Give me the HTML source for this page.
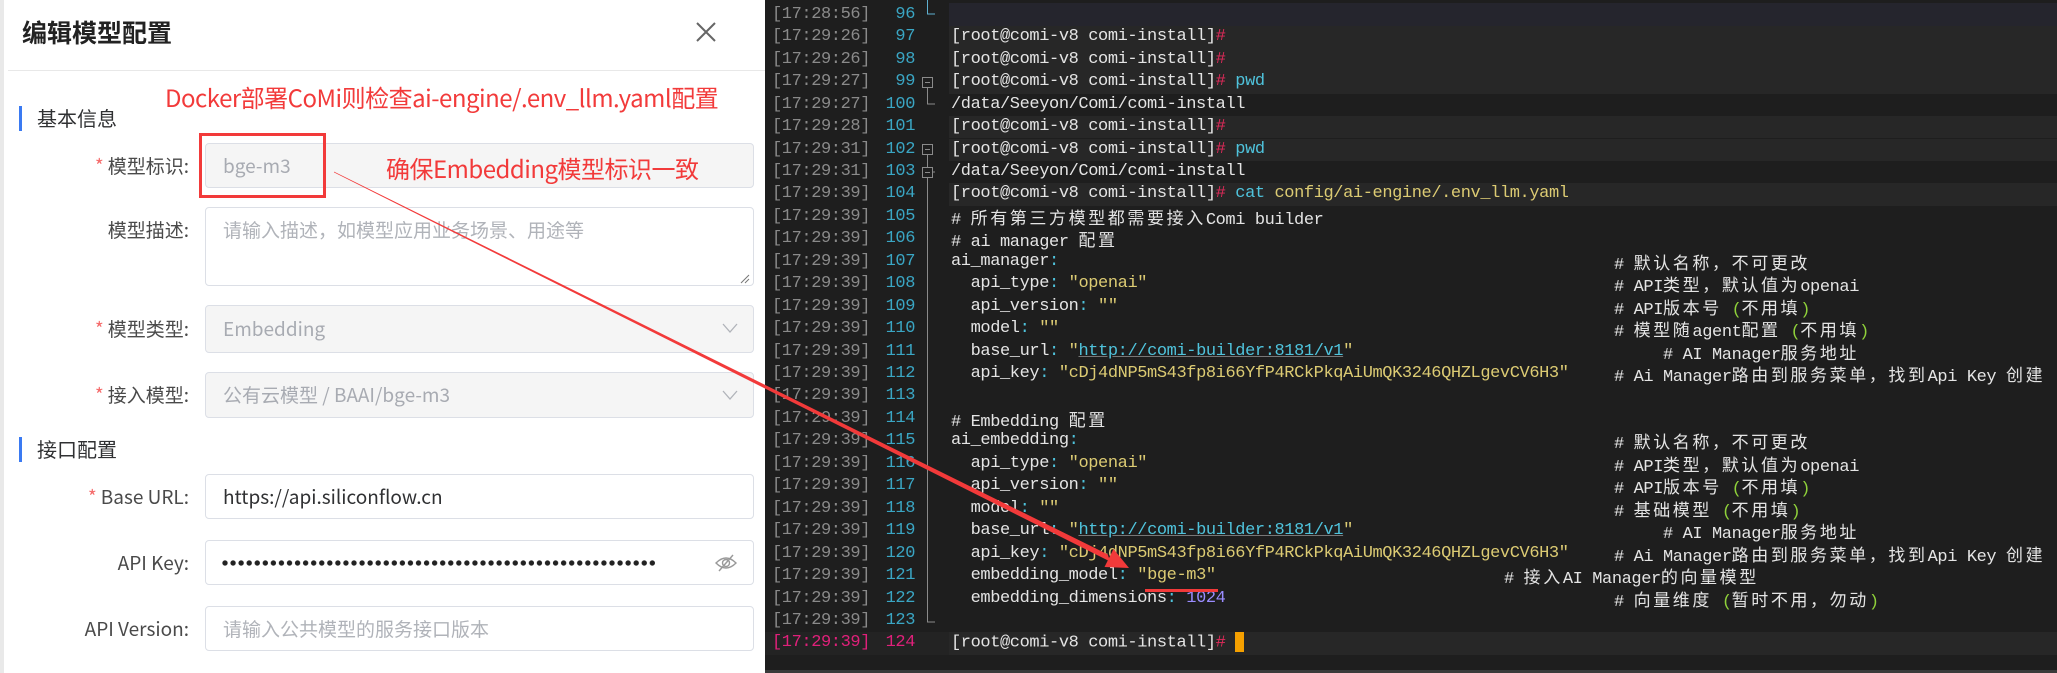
<!DOCTYPE html>
<html><head><meta charset="utf-8"><style>
*{margin:0;padding:0;box-sizing:border-box}
body{width:2057px;height:673px;overflow:hidden;background:#1e1e1e;position:relative;font-family:"Liberation Sans","Noto Sans CJK SC",sans-serif}
#panel{position:absolute;left:0;top:0;width:765px;height:673px;background:#fff;border-left:4px solid #e9e9e9}
.a{position:absolute;white-space:nowrap}
.title{left:18px;top:14px;font-size:25px;font-weight:bold;color:#222;font-family:"Noto Sans CJK SC",sans-serif}
.hr{position:absolute;left:4px;right:0;top:70px;height:1px;background:#e8e8e8}
.sec{position:absolute;left:15px;width:3px;background:#3a7af2}
.sect{font-size:20px;color:#303133;left:33px;font-family:"Noto Sans CJK SC",sans-serif;line-height:26px}
.lbl{position:absolute;right:576px;font-size:19px;color:#4a4a4a;font-family:"Noto Sans CJK SC",sans-serif;white-space:nowrap;line-height:24px}
.lbl b{color:#f56c6c;font-weight:normal;margin-right:4px}
.inp{position:absolute;left:201px;width:549px;border:1px solid #dcdfe6;border-radius:4px;background:#fff;font-size:19px;padding-left:17px;color:#303133;font-family:"Noto Sans CJK SC",sans-serif;white-space:nowrap}
.dis{background:#f5f5f5;color:#a8abb2}
.ph{color:#b0b3b9}
.red{color:#f23a3a;font-family:"Noto Sans CJK SC",sans-serif;font-size:24px;letter-spacing:-0.5px}
#term{position:absolute;left:765px;top:0;width:1292px;height:673px;font-family:"Liberation Mono","Noto Sans CJK SC",monospace;font-size:17px;letter-spacing:-0.4px;color:#e4e4e4}
.row{position:absolute;left:0;width:1292px;height:22.45px;line-height:22.45px;white-space:pre}
.ts{position:absolute;left:7px;color:#8a8a8a}
.ln{position:absolute;left:100px;width:50px;text-align:right;color:#3aa6c4}
.code{position:absolute;left:186px}
.hl{position:absolute;left:184px;right:0;top:0;bottom:0;background:#272727}
.p{color:#e02a5a}.cy{color:#4fc3dc}.y{color:#dccb73}.g{color:#8fd13a}.pu{color:#9a8cff}
.u{color:#4fc3dc;text-decoration:underline;text-decoration-color:#777}
.c{font-family:"Noto Sans CJK SC",sans-serif;letter-spacing:2.6px;font-size:17px}
.cm{position:absolute}
.dots{position:absolute;left:217px;top:558px;width:436px;height:10px;background:radial-gradient(circle at 4px 5px,#222 2.4px,transparent 2.9px);background-size:8.07px 10px}
</style></head><body>
<div id="panel">
 <div class="a title">编辑模型配置</div>
 <svg class="a" style="left:690px;top:20px" width="24" height="24" viewBox="0 0 24 24"><path d="M3 3L21 21M21 3L3 21" stroke="#666" stroke-width="2"/></svg>
 <div class="hr"></div>
 <div class="a red" style="left:161px;top:81px;line-height:32px">Docker部署CoMi则检查ai-engine/.env_llm.yaml配置</div>
 <div class="sec" style="top:106px;height:25px"></div><div class="a sect" style="top:105px">基本信息</div>
 <div class="lbl" style="top:154px"><b>*</b>模型标识:</div>
 <div class="inp dis" style="top:143px;height:45px;line-height:43px">bge-m3</div>
 <div style="position:absolute;left:195px;top:133px;width:127px;height:65px;border:3px solid #f23a3a"></div>
 <div class="a red" style="left:382px;top:152px;line-height:32px">确保Embedding模型标识一致</div>
 <div class="lbl" style="top:218px">模型描述:</div>
 <div class="inp" style="top:207px;height:79px;line-height:24px;padding-top:10px"><span class="ph">请输入描述，如模型应用业务场景、用途等</span></div>
 <svg class="a" style="left:736px;top:274px" width="10" height="10"><path d="M9 1L1 9M9 5L5 9" stroke="#777" stroke-width="1"/></svg>
 <div class="lbl" style="top:317px"><b>*</b>模型类型:</div>
 <div class="inp dis" style="top:305px;height:48px;line-height:46px">Embedding</div>
 <svg class="a" style="left:718px;top:322px" width="16" height="12"><path d="M1 2L8 10L15 2" stroke="#b0b3b9" fill="none" stroke-width="1.3"/></svg>
 <div class="lbl" style="top:383px"><b>*</b>接入模型:</div>
 <div class="inp dis" style="top:372px;height:46px;line-height:44px">公有云模型 / BAAI/bge-m3</div>
 <svg class="a" style="left:718px;top:389px" width="16" height="12"><path d="M1 2L8 10L15 2" stroke="#b0b3b9" fill="none" stroke-width="1.3"/></svg>
 <div class="sec" style="top:437px;height:25px"></div><div class="a sect" style="top:436px">接口配置</div>
 <div class="lbl" style="top:485px"><b>*</b>Base URL:</div>
 <div class="inp" style="top:474px;height:45px;line-height:43px">https://api.siliconflow.cn</div>
 <div class="lbl" style="top:551px">API Key:</div>
 <div class="inp" style="top:540px;height:45px"></div>
 <div class="dots"></div>
 <svg class="a" style="left:711px;top:553px" width="22" height="20" viewBox="0 0 22 20"><path d="M1 10Q11 0 21 10Q11 20 1 10Z" fill="none" stroke="#999" stroke-width="1.4"/><circle cx="11" cy="10" r="3.5" fill="none" stroke="#999" stroke-width="1.4"/><path d="M4 18L18 2" stroke="#999" stroke-width="1.4"/></svg>
 <div class="lbl" style="top:617px">API Version:</div>
 <div class="inp" style="top:606px;height:45px;line-height:43px"><span class="ph">请输入公共模型的服务接口版本</span></div>
</div>

<div id="term">
<div style="position:absolute;left:184px;right:0;top:3px;height:23px;background:#25252d"></div>
<svg style="position:absolute;left:150px;top:0" width="34" height="673"><g stroke="#8a8a8a" fill="none" stroke-width="1"><path d="M12.5 0V14H20" stroke="#5fb0d0"/><rect x="7.5" y="77.5" width="10" height="10" fill="#1e1e1e"/><path d="M10 82.5H15"/><path d="M12.5 88V104H20"/><rect x="7.5" y="144.5" width="10" height="10" fill="#1e1e1e"/><path d="M10 149.5H15"/><path d="M12.5 155V172H20"/><rect x="7.5" y="167.5" width="10" height="10" fill="#1e1e1e"/><path d="M10 172.5H15"/><path d="M12.5 178V622H20"/></g></svg>
<div class="row" style="top:3.8px"><span class="ts">[17:28:56]</span><span class="ln">96</span></div>
<div class="row" style="top:26.25px"><div class="hl"></div><span class="ts">[17:29:26]</span><span class="ln">97</span><span class="code">[root@comi-v8 comi-install]<span class="p">#</span></span></div>
<div class="row" style="top:48.7px"><div class="hl"></div><span class="ts">[17:29:26]</span><span class="ln">98</span><span class="code">[root@comi-v8 comi-install]<span class="p">#</span></span></div>
<div class="row" style="top:71.15px"><div class="hl"></div><span class="ts">[17:29:27]</span><span class="ln">99</span><span class="code">[root@comi-v8 comi-install]<span class="p">#</span> <span class="cy">pwd</span></span></div>
<div class="row" style="top:93.6px"><span class="ts">[17:29:27]</span><span class="ln">100</span><span class="code">/data/Seeyon/Comi/comi-install</span></div>
<div class="row" style="top:116.05px"><div class="hl"></div><span class="ts">[17:29:28]</span><span class="ln">101</span><span class="code">[root@comi-v8 comi-install]<span class="p">#</span></span></div>
<div class="row" style="top:138.5px"><div class="hl"></div><span class="ts">[17:29:31]</span><span class="ln">102</span><span class="code">[root@comi-v8 comi-install]<span class="p">#</span> <span class="cy">pwd</span></span></div>
<div class="row" style="top:160.95px"><span class="ts">[17:29:31]</span><span class="ln">103</span><span class="code">/data/Seeyon/Comi/comi-install</span></div>
<div class="row" style="top:183.4px"><div class="hl"></div><span class="ts">[17:29:39]</span><span class="ln">104</span><span class="code">[root@comi-v8 comi-install]<span class="p">#</span> <span class="cy">cat</span> <span class="y">config/ai-engine/.env_llm.yaml</span></span></div>
<div class="row" style="top:205.85px"><span class="ts">[17:29:39]</span><span class="ln">105</span><span class="code"># <span class="c">所有第三方模型都需要接入</span>Comi builder</span></div>
<div class="row" style="top:228.3px"><span class="ts">[17:29:39]</span><span class="ln">106</span><span class="code"># ai manager <span class="c">配置</span></span></div>
<div class="row" style="top:250.75px"><span class="ts">[17:29:39]</span><span class="ln">107</span><span class="code">ai_manager<span class="cy">:</span></span><span class="cm" style="left:849px"># <span class="c">默认名称，不可更改</span></span></div>
<div class="row" style="top:273.2px"><span class="ts">[17:29:39]</span><span class="ln">108</span><span class="code">  api_type<span class="cy">:</span> <span class="y">"openai"</span></span><span class="cm" style="left:849px"># API<span class="c">类型，默认值为</span>openai</span></div>
<div class="row" style="top:295.65px"><span class="ts">[17:29:39]</span><span class="ln">109</span><span class="code">  api_version<span class="cy">:</span> <span class="y">""</span></span><span class="cm" style="left:849px"># API<span class="c">版本号</span> <span class="g">(</span><span class="c">不用填</span><span class="g">)</span></span></div>
<div class="row" style="top:318.1px"><span class="ts">[17:29:39]</span><span class="ln">110</span><span class="code">  model<span class="cy">:</span> <span class="y">""</span></span><span class="cm" style="left:849px"># <span class="c">模型随</span>agent<span class="c">配置</span> <span class="g">(</span><span class="c">不用填</span><span class="g">)</span></span></div>
<div class="row" style="top:340.55px"><span class="ts">[17:29:39]</span><span class="ln">111</span><span class="code">  base_url<span class="cy">:</span> <span class="y">"</span><span class="u">http://comi-builder:8181/v1</span><span class="y">"</span></span><span class="cm" style="left:898px"># AI Manager<span class="c">服务地址</span></span></div>
<div class="row" style="top:363px"><span class="ts">[17:29:39]</span><span class="ln">112</span><span class="code">  api_key<span class="cy">:</span> <span class="y">"cDj4dNP5mS43fp8i66YfP4RCkPkqAiUmQK3246QHZLgevCV6H3"</span></span><span class="cm" style="left:849px"># Ai Manager<span class="c">路由到服务菜单，找到</span>Api Key <span class="c">创建</span></span></div>
<div class="row" style="top:385.45px"><span class="ts">[17:29:39]</span><span class="ln">113</span></div>
<div class="row" style="top:407.9px"><span class="ts">[17:29:39]</span><span class="ln">114</span><span class="code"># Embedding <span class="c">配置</span></span></div>
<div class="row" style="top:430.35px"><span class="ts">[17:29:39]</span><span class="ln">115</span><span class="code">ai_embedding<span class="cy">:</span></span><span class="cm" style="left:849px"># <span class="c">默认名称，不可更改</span></span></div>
<div class="row" style="top:452.8px"><span class="ts">[17:29:39]</span><span class="ln">116</span><span class="code">  api_type<span class="cy">:</span> <span class="y">"openai"</span></span><span class="cm" style="left:849px"># API<span class="c">类型，默认值为</span>openai</span></div>
<div class="row" style="top:475.25px"><span class="ts">[17:29:39]</span><span class="ln">117</span><span class="code">  api_version<span class="cy">:</span> <span class="y">""</span></span><span class="cm" style="left:849px"># API<span class="c">版本号</span> <span class="g">(</span><span class="c">不用填</span><span class="g">)</span></span></div>
<div class="row" style="top:497.7px"><span class="ts">[17:29:39]</span><span class="ln">118</span><span class="code">  model<span class="cy">:</span> <span class="y">""</span></span><span class="cm" style="left:849px"># <span class="c">基础模型</span> <span class="g">(</span><span class="c">不用填</span><span class="g">)</span></span></div>
<div class="row" style="top:520.15px"><span class="ts">[17:29:39]</span><span class="ln">119</span><span class="code">  base_url<span class="cy">:</span> <span class="y">"</span><span class="u">http://comi-builder:8181/v1</span><span class="y">"</span></span><span class="cm" style="left:898px"># AI Manager<span class="c">服务地址</span></span></div>
<div class="row" style="top:542.6px"><span class="ts">[17:29:39]</span><span class="ln">120</span><span class="code">  api_key<span class="cy">:</span> <span class="y">"cDj4dNP5mS43fp8i66YfP4RCkPkqAiUmQK3246QHZLgevCV6H3"</span></span><span class="cm" style="left:849px"># Ai Manager<span class="c">路由到服务菜单，找到</span>Api Key <span class="c">创建</span></span></div>
<div class="row" style="top:565.05px"><span class="ts">[17:29:39]</span><span class="ln">121</span><span class="code">  embedding_model<span class="cy">:</span> <span class="y">"bge-m3"</span></span><span class="cm" style="left:739px"># <span class="c">接入</span>AI Manager<span class="c">的向量模型</span></span></div>
<div class="row" style="top:587.5px"><span class="ts">[17:29:39]</span><span class="ln">122</span><span class="code">  embedding_dimensions<span class="cy">:</span> <span class="pu">1024</span></span><span class="cm" style="left:849px"># <span class="c">向量维度</span> <span class="g">(</span><span class="c">暂时不用，勿动</span><span class="g">)</span></span></div>
<div class="row" style="top:609.95px"><span class="ts">[17:29:39]</span><span class="ln">123</span></div>
<div class="row" style="top:632.4px;background:#232323"><div class="hl"></div><span class="ts" style="color:#e0207a">[17:29:39]</span><span class="ln" style="color:#e0207a">124</span><span class="code">[root@comi-v8 comi-install]<span class="p">#</span> <span style="display:inline-block;width:9px;height:20px;background:#f5a000;vertical-align:middle"></span></span></div>
<div style="position:absolute;left:0;right:0;top:670px;height:3px;background:#3a3a3a"></div>
</div>

<svg style="position:absolute;left:0;top:0" width="2057" height="673">
<polygon points="334,171.6 334,172.4 1110.3,561.6 1107.7,554.4" fill="#f23a3a"/>
<polygon points="1129,568 1104.5,567 1113.5,549" fill="#f23a3a"/>
<rect x="1145" y="589" width="73" height="3" fill="#f23a3a"/>
</svg>
</body></html>
